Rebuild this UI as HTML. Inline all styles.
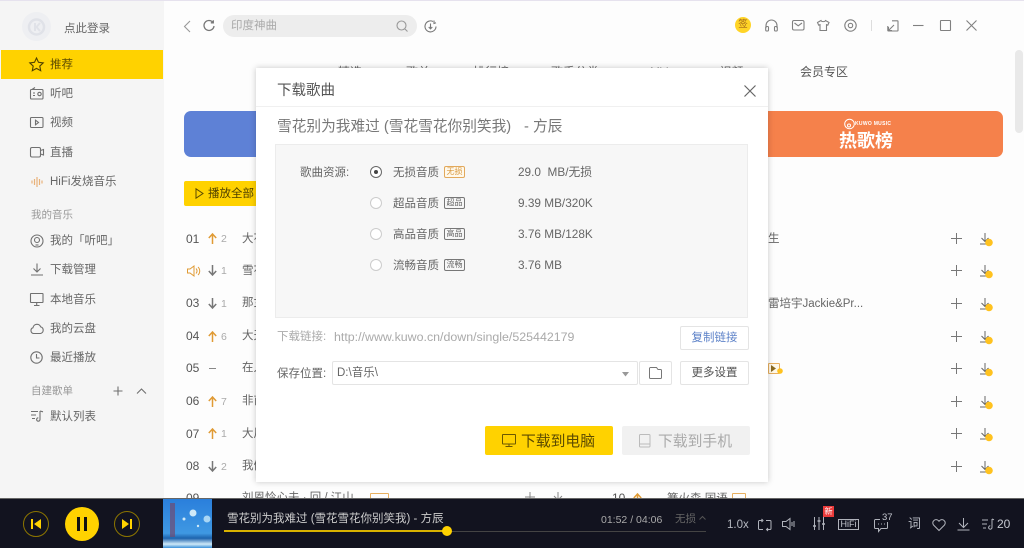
<!DOCTYPE html>
<html><head><meta charset="utf-8">
<style>
*{margin:0;padding:0;box-sizing:border-box}
html,body{width:1024px;height:548px;overflow:hidden;background:#fdfdfd;font-family:"Liberation Sans","Noto Sans CJK SC",sans-serif;color:#666}
.a{position:absolute;white-space:nowrap}
.t{position:absolute;white-space:nowrap;line-height:16px;height:16px;margin-top:1px}
svg{position:absolute;overflow:visible;fill:none}
.s{font-size:11.5px;color:#666;left:50px}
.i{stroke:#707070;stroke-width:1.1}
.n{left:186px;font-size:12px;color:#555;margin-top:0}
.c{left:221px;font-size:10.5px;color:#aaa;margin-top:0}
.m{left:242px;font-size:11.5px;margin-top:0}
.q{left:393px;font-size:11.5px;color:#666}
.b{position:absolute;left:444px;width:21px;height:12px;border:1px solid #777;border-radius:2px;font-size:8px;line-height:10px;text-align:center;color:#666}
.z{left:518px;font-size:11.8px;color:#666;margin-top:0}
.btn{position:absolute;background:#fff;border:1px solid #e4e4e4;border-radius:2px;font-size:11.5px;line-height:23px;text-align:center;color:#555}
</style></head><body>

<!-- top tint and page -->
<div class="a" style="left:0;top:0;width:1024px;height:1px;background:#e6e2ee"></div>
<div class="a" style="left:1015px;top:50px;width:8px;height:83px;background:#e9e9e9;border-radius:4px"></div>

<!-- sidebar -->
<div class="a" style="left:0;top:1px;width:164px;height:497px;background:#f5f5f5"></div>
<div class="a" style="left:22px;top:12px;width:29px;height:29px;border-radius:50%;background:#eeeff2"></div>
<svg style="left:22px;top:12px" width="29" height="29"><circle cx="14.5" cy="15" r="7.5" stroke="#e0e2e8" stroke-width="2.5"/><path d="M13 11v8M18 11l-3.500 4 3.500 4" stroke="#e0e2e8" stroke-width="2"/></svg>
<div class="t" style="left:64px;top:20px;font-size:11.500px;color:#666">点此登录</div>
<div class="a" style="left:1px;top:50px;width:162px;height:29px;background:#ffd200"></div>

<svg class="i" style="left:29px;top:57px;stroke:#4d3f00" width="15" height="14"><path d="M7.500 1l2 4.300 4.700.6-3.400 3.200.9 4.600-4.200-2.300-4.200 2.300.9-4.600L.8 5.900l4.700-.6z"/></svg>
<div class="t s" style="top:56px;color:#5c4b00">推荐</div>
<svg class="i" style="left:30px;top:87px" width="14" height="13"><rect x=".5" y="2.500" width="12.500" height="9.500" rx="1"/><path d="M2 2.500L5 .5M3 6h2M3 8.500h2"/><circle cx="9.500" cy="7" r="1.700"/></svg>
<div class="t s" style="top:85px">听吧</div>
<svg class="i" style="left:30px;top:117px" width="14" height="12"><rect x=".5" y=".5" width="12.500" height="10" rx="1"/><path d="M5.500 3.200l3 2.300-3 2.300z"/></svg>
<div class="t s" style="top:114px">视频</div>
<svg class="i" style="left:30px;top:147px" width="15" height="11"><rect x=".5" y=".5" width="10" height="9.500" rx="1.500"/><path d="M10.500 3.500l3-1v5.500l-3-1"/></svg>
<div class="t s" style="top:144px">直播</div>
<svg style="left:31px;top:176px;stroke:#e8b27a;stroke-width:1.200" width="13" height="12"><path d="M1 4.500v3M3.500 3v6M6 1v10M8.500 3v6M11 4.500v3"/></svg>
<div class="t s" style="top:173px">HiFi发烧音乐</div>
<div class="t" style="left:31px;top:206px;font-size:10.500px;color:#999">我的音乐</div>
<svg class="i" style="left:30px;top:234px" width="14" height="14"><circle cx="7" cy="7" r="6"/><circle cx="7" cy="6" r="2.500"/><path d="M5.500 11h3"/></svg>
<div class="t s" style="top:232px">我的「听吧」</div>
<svg class="i" style="left:30px;top:263px" width="14" height="13"><path d="M7 .5v8M3.500 5.500L7 9l3.500-3.500M1 12h12"/></svg>
<div class="t s" style="top:261px">下载管理</div>
<svg class="i" style="left:30px;top:293px" width="14" height="13"><rect x=".5" y=".5" width="12.500" height="9" rx=".5"/><path d="M4 12.500h5.500M6.700 9.500v3"/></svg>
<div class="t s" style="top:291px">本地音乐</div>
<svg class="i" style="left:30px;top:323px" width="14" height="11"><path d="M3.500 10.500a3 3 0 0 1-.5-5.800 4 4 0 0 1 7.700-.8 3.400 3.400 0 0 1-.2 6.600z"/></svg>
<div class="t s" style="top:320px">我的云盘</div>
<svg class="i" style="left:30px;top:351px" width="13" height="13"><circle cx="6.500" cy="6.500" r="5.700"/><path d="M6.500 3v4h3"/></svg>
<div class="t s" style="top:349px">最近播放</div>
<div class="t" style="left:31px;top:382px;font-size:10.500px;color:#999">自建歌单</div>
<svg class="i" style="left:113px;top:386px" width="10" height="10"><path d="M5 .5v9M.5 5h9"/></svg>
<svg class="i" style="left:136px;top:388px" width="11" height="7"><path d="M1 5.500L5.500 1 10 5.500"/></svg>
<svg class="i" style="left:31px;top:410px" width="13" height="12"><path d="M0 1.500h7M0 5h5M1 8.500h3M9 1v8.500a1.700 1.700 0 1 1-1.700-1.700M9 1l3 .8"/></svg>
<div class="t s" style="top:408px">默认列表</div>

<!-- top bar -->
<svg style="left:183px;top:20px;stroke:#999;stroke-width:1.100" width="8" height="13"><path d="M7 1L1.500 6.500 7 12"/></svg>
<svg style="left:203px;top:20px;stroke:#777;stroke-width:1.300" width="12" height="12"><path d="M9.800 2.200A5 5 0 1 0 11 6M10.300.3v2.500H7.800"/></svg>
<div class="a" style="left:223px;top:15px;width:194px;height:22px;border-radius:11px;background:#ededed"></div>
<div class="t" style="left:231px;top:17px;font-size:11.500px;color:#aaa">印度神曲</div>
<svg style="left:396px;top:20px;stroke:#999;stroke-width:1.100" width="12" height="12"><circle cx="5.500" cy="5.500" r="4.500"/><path d="M9 9l2.500 2.500"/></svg>
<svg style="left:424px;top:20px;stroke:#777;stroke-width:1.100" width="13" height="13"><path d="M9 1.500a5.500 5.500 0 1 0 3 5"/><path d="M6.500 3.500v5M4.700 7l1.800 1.800L8.300 7"/><path d="M10 .5v3l2-.8"/></svg>

<div class="a" style="left:735px;top:17px;width:16px;height:16px;border-radius:50%;background:#ffd427"></div>
<div class="a" style="left:738px;top:20px;width:10px;height:10px;font-size:9.500px;line-height:10px;color:#a0661a;text-align:center">签</div>
<svg class="i" style="left:765px;top:19px;stroke:#808080" width="13" height="13"><path d="M1 9V6.500a5.500 5.500 0 0 1 11 0V9"/><rect x=".7" y="7.500" width="2.800" height="4.500" rx="1"/><rect x="9.500" y="7.500" width="2.800" height="4.500" rx="1"/></svg>
<svg class="i" style="left:792px;top:20px;stroke:#808080" width="13" height="11"><rect x=".5" y=".5" width="11.500" height="9.500" rx="1.500"/><path d="M2.500 3l3.700 2.800L10 3"/></svg>
<svg class="i" style="left:817px;top:20px;stroke:#808080" width="13" height="11"><path d="M4 .5L.5 2.500l1.200 2.700L3 4.700V10.500h6.500V4.700l1.300.5L12 2.500 8.500.5C8 2 4.500 2 4 .5z"/></svg>
<svg class="i" style="left:844px;top:19px;stroke:#808080" width="13" height="13"><circle cx="6.500" cy="6.500" r="5.700"/><circle cx="6.500" cy="6.500" r="2.200"/></svg>
<div class="a" style="left:871px;top:20px;width:1px;height:11px;background:#ddd"></div>
<svg class="i" style="left:887px;top:20px;stroke:#808080" width="12" height="12"><path d="M5 .8h5.500a.5.500 0 0 1 .5.500v9.200a.5.500 0 0 1-.5.500H1.300a.5.500 0 0 1-.5-.5V6M7 5L1.500 10.500M1.500 7v3.500H5"/></svg>
<svg class="i" style="left:913px;top:25px;stroke:#808080" width="11" height="2"><path d="M0 .5h10.500"/></svg>
<svg class="i" style="left:940px;top:20px;stroke:#808080" width="11" height="11"><rect x=".5" y=".5" width="10" height="10" rx=".5"/></svg>
<svg class="i" style="left:966px;top:20px;stroke:#808080" width="11" height="11"><path d="M.5.500l10 10M10.500.5l-10 10"/></svg>

<!-- background content -->
<div class="t" style="left:338px;top:63px;font-size:12px;color:#666">精选</div>
<div class="t" style="left:406px;top:63px;font-size:12px;color:#666">歌单</div>
<div class="t" style="left:473px;top:63px;font-size:12px;color:#666">排行榜</div>
<div class="t" style="left:551px;top:63px;font-size:12px;color:#666">歌手分类</div>
<div class="t" style="left:650px;top:63px;font-size:12px;color:#666">MV</div>
<div class="t" style="left:712px;top:63px;font-size:12px;color:#666">· 视频</div>
<div class="t" style="left:800px;top:63px;font-size:12px;color:#555">会员专区</div>

<div class="a" style="left:184px;top:111px;width:200px;height:46px;background:#5e81d6;border-radius:7px"></div>
<div class="a" style="left:700px;top:111px;width:303px;height:46px;background:#f5814b;border-radius:7px"></div>
<svg style="left:844px;top:118px;stroke:#fff;stroke-width:1" width="11" height="12"><circle cx="5.500" cy="6" r="4.800"/><circle cx="5" cy="7.500" r="1.500"/></svg>
<div class="t" style="left:855px;top:115px;font-size:5px;font-weight:bold;color:#fff;letter-spacing:.3px">KUWO MUSIC</div>
<div class="t" style="left:839px;top:132px;font-size:18px;font-weight:bold;color:#fff">热歌榜</div>

<div class="a" style="left:184px;top:181px;width:100px;height:25px;background:#ffd200;border-radius:2px"></div>
<svg style="left:195px;top:188px;stroke:#5c4b00;stroke-width:1" width="9" height="11"><path d="M1 .8l7 4.700-7 4.700z"/></svg>
<div class="t" style="left:208px;top:185px;font-size:11.500px;color:#4d3f00">播放全部</div>

<div class="t n" style="top:231px">01</div><svg style="left:208px;top:233px;stroke:#e09b35;stroke-width:1.500" width="9" height="11"><path d="M4.500 11V1M.8 5L4.500 1l3.700 4"/></svg><div class="t c" style="top:231px">2</div><div class="t m" style="top:231px">大花轿</div>
<svg style="left:187px;top:265px;stroke:#e09b35;stroke-width:1" width="14" height="12"><path d="M.5 4h2.500L7 1v10L3 8H.5zM9 3.500a3.500 3.500 0 0 1 0 5M11 2a5.500 5.500 0 0 1 0 8"/></svg><svg style="left:208px;top:265px;stroke:#777;stroke-width:1.500" width="9" height="11"><path d="M4.500 0v10M.8 6l3.700 4 3.700-4"/></svg><div class="t c" style="top:263px">1</div><div class="t m" style="top:263px">雪花</div>
<div class="t n" style="top:295px">03</div><svg style="left:208px;top:298px;stroke:#777;stroke-width:1.500" width="9" height="11"><path d="M4.500 0v10M.8 6l3.700 4 3.700-4"/></svg><div class="t c" style="top:296px">1</div><div class="t m" style="top:295px">那女孩</div>
<div class="t n" style="top:328px">04</div><svg style="left:208px;top:331px;stroke:#e09b35;stroke-width:1.500" width="9" height="11"><path d="M4.500 11V1M.8 5L4.500 1l3.700 4"/></svg><div class="t c" style="top:329px">6</div><div class="t m" style="top:328px">大天蓬</div>
<div class="t n" style="top:360px">05</div><div class="a" style="left:209px;top:368px;width:7px;height:1px;background:#888"></div><div class="t m" style="top:360px">在人间</div>
<div class="t n" style="top:393px">06</div><svg style="left:208px;top:396px;stroke:#e09b35;stroke-width:1.500" width="9" height="11"><path d="M4.500 11V1M.8 5L4.500 1l3.700 4"/></svg><div class="t c" style="top:394px">7</div><div class="t m" style="top:393px">非酋</div>
<div class="t n" style="top:426px">07</div><svg style="left:208px;top:428px;stroke:#e09b35;stroke-width:1.500" width="9" height="11"><path d="M4.500 11V1M.8 5L4.500 1l3.700 4"/></svg><div class="t c" style="top:426px">1</div><div class="t m" style="top:426px">大风吹</div>
<div class="t n" style="top:458px">08</div><svg style="left:208px;top:461px;stroke:#777;stroke-width:1.500" width="9" height="11"><path d="M4.500 0v10M.8 6l3.700 4 3.700-4"/></svg><div class="t c" style="top:459px">2</div><div class="t m" style="top:458px">我们</div>
<div class="t n" style="top:490px">09</div><div class="a" style="left:209px;top:498px;width:7px;height:1px;background:#888"></div><div class="t m" style="top:490px">刘恩怜心夫 · 回 / 江山</div><div class="a" style="left:370px;top:493px;width:19px;height:10px;border:1px solid #e8b060;border-radius:1px"></div>
<svg style="left:525px;top:492px;stroke:#888;stroke-width:1" width="40" height="10"><path d="M5 0v10M0 5h10M33 0v7M29 4l4 4 4-4"/></svg>
<div class="t n" style="left:612px;top:490px">10</div><svg style="left:633px;top:493px;stroke:#e09b35;stroke-width:1.500" width="9" height="11"><path d="M4.500 11V1M.8 5L4.500 1l3.700 4"/></svg><div class="t" style="left:667px;top:490px;font-size:11.500px">篝火森 国语</div><div class="a" style="left:732px;top:493px;width:14px;height:10px;border:1px solid #e8b060;border-radius:1px"></div>

<div class="t" style="left:768px;top:230px;font-size:11.500px">生</div>
<div class="t" style="left:768px;top:295px;font-size:11.500px">雷培宇Jackie&amp;Pr...</div>
<div class="a" style="left:768px;top:363px;width:12px;height:11px;border:1px solid #e8b060;border-radius:1px;background:#fff8e8"></div>
<svg style="left:771px;top:365px" width="9" height="9"><path d="M0 0l5 3.500L0 7z" fill="#8a6a20"/><circle cx="9" cy="6" r="2.800" fill="#ffc21f"/></svg>

<svg style="left:951px;top:233px;stroke:#777;stroke-width:1" width="11" height="241">
<path d="M5.500 0v11M0 5.500h11M5.500 32v11M0 37.500h11M5.500 65v11M0 70.500h11M5.500 98v11M0 103.500h11M5.500 130v11M0 135.500h11M5.500 163v11M0 168.500h11M5.500 195v11M0 200.500h11M5.500 228v11M0 233.500h11"/></svg>
<svg style="left:979px;top:233px" width="16" height="250">
<g><path d="M6 0v8M2.500 5L6 8.500 9.500 5M1 11h6" stroke="#666" fill="none"/><circle cx="10" cy="9.500" r="3.800" fill="#ffc21f"/></g>
<g transform="translate(0,32)"><path d="M6 0v8M2.500 5L6 8.500 9.500 5M1 11h6" stroke="#666"/><circle cx="10" cy="9.500" r="3.800" fill="#ffc21f"/></g>
<g transform="translate(0,65)"><path d="M6 0v8M2.500 5L6 8.500 9.500 5M1 11h6" stroke="#666"/><circle cx="10" cy="9.500" r="3.800" fill="#ffc21f"/></g>
<g transform="translate(0,98)"><path d="M6 0v8M2.500 5L6 8.500 9.500 5M1 11h6" stroke="#666"/><circle cx="10" cy="9.500" r="3.800" fill="#ffc21f"/></g>
<g transform="translate(0,130)"><path d="M6 0v8M2.500 5L6 8.500 9.500 5M1 11h6" stroke="#666"/><circle cx="10" cy="9.500" r="3.800" fill="#ffc21f"/></g>
<g transform="translate(0,163)"><path d="M6 0v8M2.500 5L6 8.500 9.500 5M1 11h6" stroke="#666"/><circle cx="10" cy="9.500" r="3.800" fill="#ffc21f"/></g>
<g transform="translate(0,195)"><path d="M6 0v8M2.500 5L6 8.500 9.500 5M1 11h6" stroke="#666"/><circle cx="10" cy="9.500" r="3.800" fill="#ffc21f"/></g>
<g transform="translate(0,228)"><path d="M6 0v8M2.500 5L6 8.500 9.500 5M1 11h6" stroke="#666"/><circle cx="10" cy="9.500" r="3.800" fill="#ffc21f"/></g>
</svg>

<!-- modal -->
<div class="a" style="left:256px;top:68px;width:512px;height:414px;background:#fff;box-shadow:0 0 6px rgba(0,0,0,.22)"></div>
<div class="t" style="left:277px;top:82px;font-size:14.500px;color:#555">下载歌曲</div>
<div class="a" style="left:256px;top:106px;width:512px;height:1px;background:#f0f0f0"></div>
<svg style="left:744px;top:85px;stroke:#666;stroke-width:1.200" width="12" height="12"><path d="M.5.500l11 11M11.500.5l-11 11"/></svg>
<div class="t" style="left:277px;top:118px;font-size:14.700px;color:#777">雪花别为我难过 (雪花雪花你别笑我)</div>
<div class="t" style="left:524px;top:118px;font-size:14.700px;color:#777">- 方辰</div>
<div class="a" style="left:275px;top:144px;width:473px;height:174px;background:#f7f7f7;border:1px solid #ececec"></div>

<div class="t" style="left:300px;top:164px;font-size:11.500px;color:#666">歌曲资源:</div>
<div class="a" style="left:370px;top:166px;width:12px;height:12px;border-radius:50%;border:1px solid #666;background:#fff"></div>
<div class="a" style="left:374px;top:170px;width:4px;height:4px;border-radius:50%;background:#444"></div>
<div class="t q" style="top:164px">无损音质</div>
<div class="b" style="top:166px;border-color:#e2a95c;color:#d8983f;background:#fff9ec">无损</div>
<div class="t z" style="top:164px">29.0&nbsp; MB/无损</div>

<div class="a" style="left:370px;top:197px;width:12px;height:12px;border-radius:50%;border:1px solid #ccc;background:#fff"></div>
<div class="t q" style="top:195px">超品音质</div>
<div class="b" style="top:197px">超品</div>
<div class="t z" style="top:195px">9.39 MB/320K</div>

<div class="a" style="left:370px;top:228px;width:12px;height:12px;border-radius:50%;border:1px solid #ccc;background:#fff"></div>
<div class="t q" style="top:226px">高品音质</div>
<div class="b" style="top:228px">高品</div>
<div class="t z" style="top:226px">3.76 MB/128K</div>

<div class="a" style="left:370px;top:259px;width:12px;height:12px;border-radius:50%;border:1px solid #ccc;background:#fff"></div>
<div class="t q" style="top:257px">流畅音质</div>
<div class="b" style="top:259px">流畅</div>
<div class="t z" style="top:257px">3.76 MB</div>

<div class="t" style="left:277px;top:328px;font-size:11.500px;color:#aaa">下载链接:</div>
<div class="t" style="left:334px;top:328px;font-size:12.400px;color:#aaa">http://www.kuwo.cn/down/single/525442179</div>
<div class="btn" style="left:680px;top:326px;width:69px;height:24px;color:#5d82c8">复制链接</div>

<div class="t" style="left:277px;top:365px;font-size:11.500px;color:#666">保存位置:</div>
<div class="a" style="left:332px;top:361px;width:306px;height:24px;border:1px solid #e4e4e4;border-radius:2px;background:#fff"></div>
<div class="t" style="left:337px;top:364px;font-size:11.500px;color:#666">D:\音乐\</div>
<svg style="left:622px;top:372px" width="7" height="5"><path d="M0 0h7L3.500 4.500z" fill="#999"/></svg>
<div class="a" style="left:639px;top:361px;width:33px;height:24px;border:1px solid #e4e4e4;border-radius:2px;background:#fff"></div>
<svg style="left:649px;top:367px;stroke:#777;stroke-width:1" width="13" height="12"><path d="M.5 10.500V1.500a1 1 0 0 1 1-1h6l1.500 2h2.500a1 1 0 0 1 1 1v7a1 1 0 0 1-1 1h-10a1 1 0 0 1-1-1z"/></svg>
<div class="btn" style="left:680px;top:361px;width:69px;height:24px">更多设置</div>

<div class="a" style="left:485px;top:426px;width:128px;height:29px;background:#ffd200;border-radius:2px"></div>
<svg style="left:502px;top:434px;stroke:#6b5800;stroke-width:1" width="14" height="14"><rect x=".5" y=".5" width="13" height="9.500" rx=".5"/><path d="M3.500 12.500h7M7 10v2.500"/></svg>
<div class="t" style="left:521px;top:433px;font-size:14.800px;color:#5c4b00">下载到电脑</div>
<div class="a" style="left:622px;top:426px;width:128px;height:29px;background:#f1f1f1;border-radius:2px"></div>
<svg style="left:639px;top:434px;stroke:#bbb;stroke-width:1" width="12" height="14"><rect x=".5" y=".5" width="10.500" height="12.500" rx="1"/><path d="M.5 10h10.500"/></svg>
<div class="t" style="left:658px;top:433px;font-size:14.800px;color:#aaa">下载到手机</div>

<!-- footer -->
<div class="a" style="left:0;top:498px;width:1024px;height:50px;background:#12131f;border-top:1px solid #666"></div>
<div class="a" style="left:23px;top:511px;width:26px;height:26px;border-radius:50%;border:1px solid #8c7500"></div>
<svg style="left:31px;top:518px" width="11" height="12"><path d="M0 1h2v10H0zM10 1v10L3 6z" fill="#ffd200"/></svg>
<div class="a" style="left:65px;top:507px;width:34px;height:34px;border-radius:50%;background:#ffd200"></div>
<div class="a" style="left:77px;top:517px;width:3px;height:14px;background:#111"></div>
<div class="a" style="left:84px;top:517px;width:3px;height:14px;background:#111"></div>
<div class="a" style="left:114px;top:511px;width:26px;height:26px;border-radius:50%;border:1px solid #8c7500"></div>
<svg style="left:122px;top:518px" width="11" height="12"><path d="M0 1l7 5-7 5zM8 1h2v10H8z" fill="#ffd200"/></svg>

<svg style="left:163px;top:499px" width="49" height="49"><defs><linearGradient id="g" x1="0" y1="0" x2="0" y2="1"><stop offset="0" stop-color="#2a7fdc"/><stop offset=".7" stop-color="#3f98e2"/><stop offset=".8" stop-color="#1d63ad"/><stop offset=".92" stop-color="#cfe9f8"/><stop offset="1" stop-color="#3a8fd8"/></linearGradient></defs><rect width="49" height="49" fill="url(#g)"/><rect x="7" y="4" width="5" height="34" fill="#6f4a70" opacity=".7"/><circle cx="30" cy="14" r="3.500" fill="#cfe9f8"/><circle cx="44" cy="20" r="3.500" fill="#a9d6f5"/><circle cx="21" cy="20" r="1.500" fill="#cfe9f8"/><circle cx="35" cy="27" r="1.200" fill="#cfe9f8"/></svg>

<div class="t" style="left:227px;top:510px;font-size:11.500px;color:#ccc">雪花别为我难过 (雪花雪花你别笑我) - 方辰</div>
<div class="t" style="left:601px;top:511px;font-size:10.500px;color:#aaa">01:52 / 04:06</div>
<div class="t" style="left:675px;top:510px;font-size:10.500px;color:#666">无损</div>
<svg style="left:699px;top:516px;stroke:#555;stroke-width:1" width="7" height="4"><path d="M.5 3.500L3.500.5l3 3"/></svg>
<div class="a" style="left:224px;top:531px;width:482px;height:1px;background:#444"></div>
<div class="a" style="left:224px;top:530px;width:223px;height:2px;background:#d8b200"></div>
<div class="a" style="left:442px;top:526px;width:10px;height:10px;border-radius:50%;background:#ffd200"></div>

<div class="t" style="left:727px;top:516px;font-size:11.500px;color:#b5b8c0">1.0x</div>
<svg style="left:758px;top:519px;stroke:#b0b3bb;stroke-width:1" width="14" height="12"><path d="M4 1.500H1.500a1 1 0 0 0-1 1v7a1 1 0 0 0 1 1H5M9 10.500h3a1 1 0 0 0 1-1v-7a1 1 0 0 0-1-1H8M3.500 0l1.500 1.500L3.500 3M10 9l-1.500 1.500L10 12"/></svg>
<svg style="left:782px;top:518px;stroke:#b0b3bb;stroke-width:1" width="14" height="12"><path d="M.5 3.500h3.500L8 .5v11l-4-3H.5zM10 4v4M12 3v6"/></svg>
<svg style="left:813px;top:517px;stroke:#b0b3bb;stroke-width:1" width="12" height="14"><path d="M1.500 0v13M6 0v13M10.500 0v13"/><path d="M0 9h3M4.500 4h3M9 7h3" stroke-width="1.500"/></svg>
<div class="a" style="left:823px;top:506px;width:11px;height:11px;background:#ea3b3b;color:#fff;font-size:8px;line-height:11px;text-align:center">新</div>
<div class="a" style="left:838px;top:519px;width:21px;height:11px;border:1px solid #b0b3bb;font-size:9px;line-height:9px;text-align:center;color:#c5c8d0">HiFi</div>
<svg style="left:874px;top:519px;stroke:#b0b3bb;stroke-width:1" width="14" height="13"><path d="M1.500.500h11a1 1 0 0 1 1 1v7a1 1 0 0 1-1 1H7l-2.500 3V9.500h-3a1 1 0 0 1-1-1v-7a1 1 0 0 1 1-1z"/><path d="M4 5h1M7 5h1M10 5h1"/></svg>
<div class="a" style="left:880px;top:512px;width:12px;height:10px;background:#12131f"></div>
<div class="t" style="left:882px;top:509px;font-size:9.500px;color:#c5c8d0">37</div>
<div class="t" style="left:908px;top:515px;font-size:13px;color:#b5b8c0">词</div>
<svg style="left:932px;top:519px;stroke:#b0b3bb;stroke-width:1" width="14" height="12"><path d="M7 11.500L1.500 6a3.300 3.300 0 0 1 5-4.300l.5.600.5-.6a3.300 3.300 0 0 1 5 4.300z"/></svg>
<svg style="left:957px;top:518px;stroke:#b0b3bb;stroke-width:1" width="13" height="13"><path d="M6.500 0v9M2 5l4.500 4.500L11 5M.5 12h12"/></svg>
<svg style="left:982px;top:519px;stroke:#b0b3bb;stroke-width:1" width="12" height="12"><path d="M0 1h6M0 5h5M1 9h3M10 0v8.500a1.700 1.700 0 1 1-1.700-1.700M10 0l2 .8"/></svg>
<div class="t" style="left:997px;top:515px;font-size:12px;color:#c5c8d0">20</div>

</body></html>
